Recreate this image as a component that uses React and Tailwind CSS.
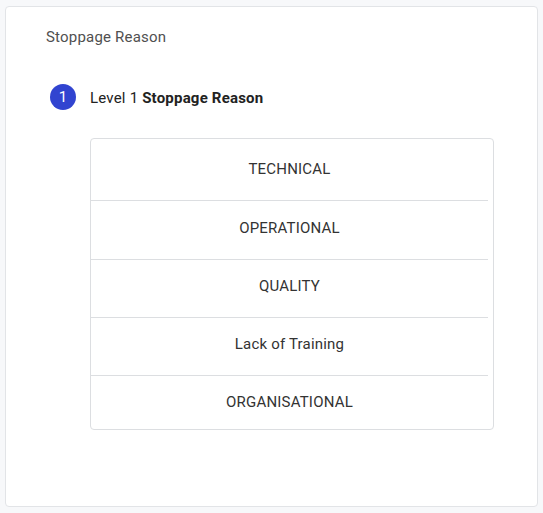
export default function App() {
  const reasons = [
    { label: "TECHNICAL", h: "h-[59px]" },
    { label: "OPERATIONAL", h: "h-[59px]" },
    { label: "QUALITY", h: "h-[58px]" },
    { label: "Lack of Training", h: "h-[58px]" },
    { label: "ORGANISATIONAL", h: "h-[53px]" },
  ];

  return (
    <div
      className="min-h-[513px] w-full bg-[#f7f8fa] px-[5px] pt-[6px] pb-[6px] tracking-[0.2px]"
      style={{ fontFamily: "Roboto, 'Noto Sans', sans-serif" }}
    >
      <div className="h-[501px] rounded-[4px] border border-[#e2e4e7] bg-white pl-[40px] pr-[43px] pt-[20px]">
        {/* Heading */}
        <h2 className="text-[15px] leading-[20px] text-[#505050]">Stoppage Reason</h2>

        {/* Step */}
        <div className="mt-[37px] ml-[4px]">
          <div className="flex items-center gap-[14px]">
            <div className="flex h-[26px] w-[26px] items-center justify-center rounded-full bg-[#3144d0] text-[15px] text-white">
              1
            </div>
            <p className="pt-[1px] text-[15px] leading-[20px] text-[#222]">
              Level 1 <span className="font-bold">Stoppage Reason</span>
            </p>
          </div>

          {/* Options */}
          <div className="mt-[28px] ml-[40px] w-[404px] rounded-[4px] border border-[#dcdee1] pt-[3px]">
            {reasons.map((r, i) => {
              const last = i === reasons.length - 1;
              return (
                <div
                  key={r.label}
                  className={`mr-[5px] flex ${r.h} items-center justify-center text-[15px] text-[#333] ${
                    last ? "" : "border-b border-[#dcdee1] pb-[4px]"
                  }`}
                >
                  {r.label}
                </div>
              );
            })}
          </div>
        </div>
      </div>
    </div>
  );
}
